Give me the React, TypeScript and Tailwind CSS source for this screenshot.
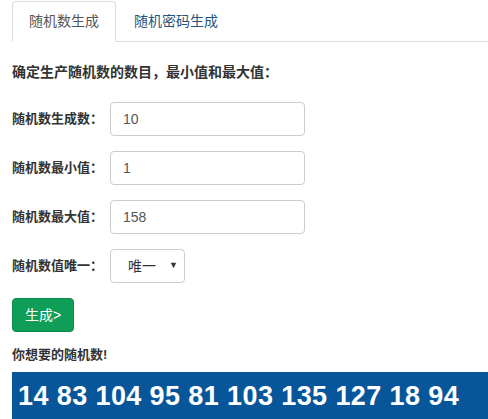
import { useState } from "react";

const cjk = "font-['Liberation_Sans','Noto_Sans_CJK_SC',sans-serif]";

function Field({ label, value }: { label: string; value: string }) {
  return (
    <div className="flex items-center h-[34px]">
      <label className="w-[98px] text-[13px] font-bold text-[#333]">{label}</label>
      <input
        className="w-[195px] h-[34px] px-3 text-[14px] text-[#555] border border-[#ccc] rounded-[4px] outline-none"
        defaultValue={value}
      />
    </div>
  );
}

export default function App() {
  const [tab, setTab] = useState(0);
  const nums = [14, 83, 104, 95, 81, 103, 135, 127, 18, 94];

  return (
    <div className={`${cjk} bg-white w-[488px] h-[419px] overflow-hidden pl-3`}>
      {/* tabs */}
      <div className="flex border-b border-[#ddd] h-[42px] pt-px">
        <button
          onClick={() => setTab(0)}
          className={`px-4 h-[41px] text-[14px] rounded-t-[4px] -mb-px ${
            tab === 0 ? "border border-[#ddd] border-b-white bg-white text-[#555]" : "text-[#245580]"
          }`}
        >
          随机数生成
        </button>
        <button
          onClick={() => setTab(1)}
          className={`px-4 ml-[2px] h-[41px] text-[14px] rounded-t-[4px] -mb-px ${
            tab === 1 ? "border border-[#ddd] border-b-white bg-white text-[#555]" : "text-[#245580]"
          }`}
        >
          随机密码生成
        </button>
      </div>

      <div className="pt-[21px]">
        <p className="text-[14px] font-bold text-[#333] leading-[18px]">确定生产随机数的数目，最小值和最大值：</p>

        <div className="flex flex-col gap-[15px] mt-[21px]">
          <Field label="随机数生成数：" value="10" />
          <Field label="随机数最小值：" value="1" />
          <Field label="随机数最大值：" value="158" />
          <div className="flex items-center h-[34px]">
            <label className="w-[98px] text-[13px] font-bold text-[#333]">随机数值唯一：</label>
            <div className="relative w-[75px] h-[34px] border border-[#ccc] rounded-[4px] flex items-center">
              <span className="pl-[17px] text-[14px] text-[#333]">唯一</span>
              <span className="absolute right-[6px] top-[9px] text-[9px] text-[#333]">▼</span>
            </div>
          </div>
        </div>

        <button className="mt-[15px] w-[62px] h-[34px] bg-[#0f9d58] border border-[#0b8a4c] rounded-[4px] text-white text-[14px]">
          生成&gt;
        </button>

        <p className="mt-[14px] text-[13px] font-bold text-[#333] leading-[18px]">你想要的随机数!</p>

        <div className="mt-[8px] h-[48px] bg-[#07569a] flex items-center pl-[6px]">
          <span className="font-['Liberation_Sans',sans-serif] font-bold text-white text-[27px] tracking-[0.4px]">
            {nums.join(" ")}
          </span>
        </div>
      </div>
    </div>
  );
}
